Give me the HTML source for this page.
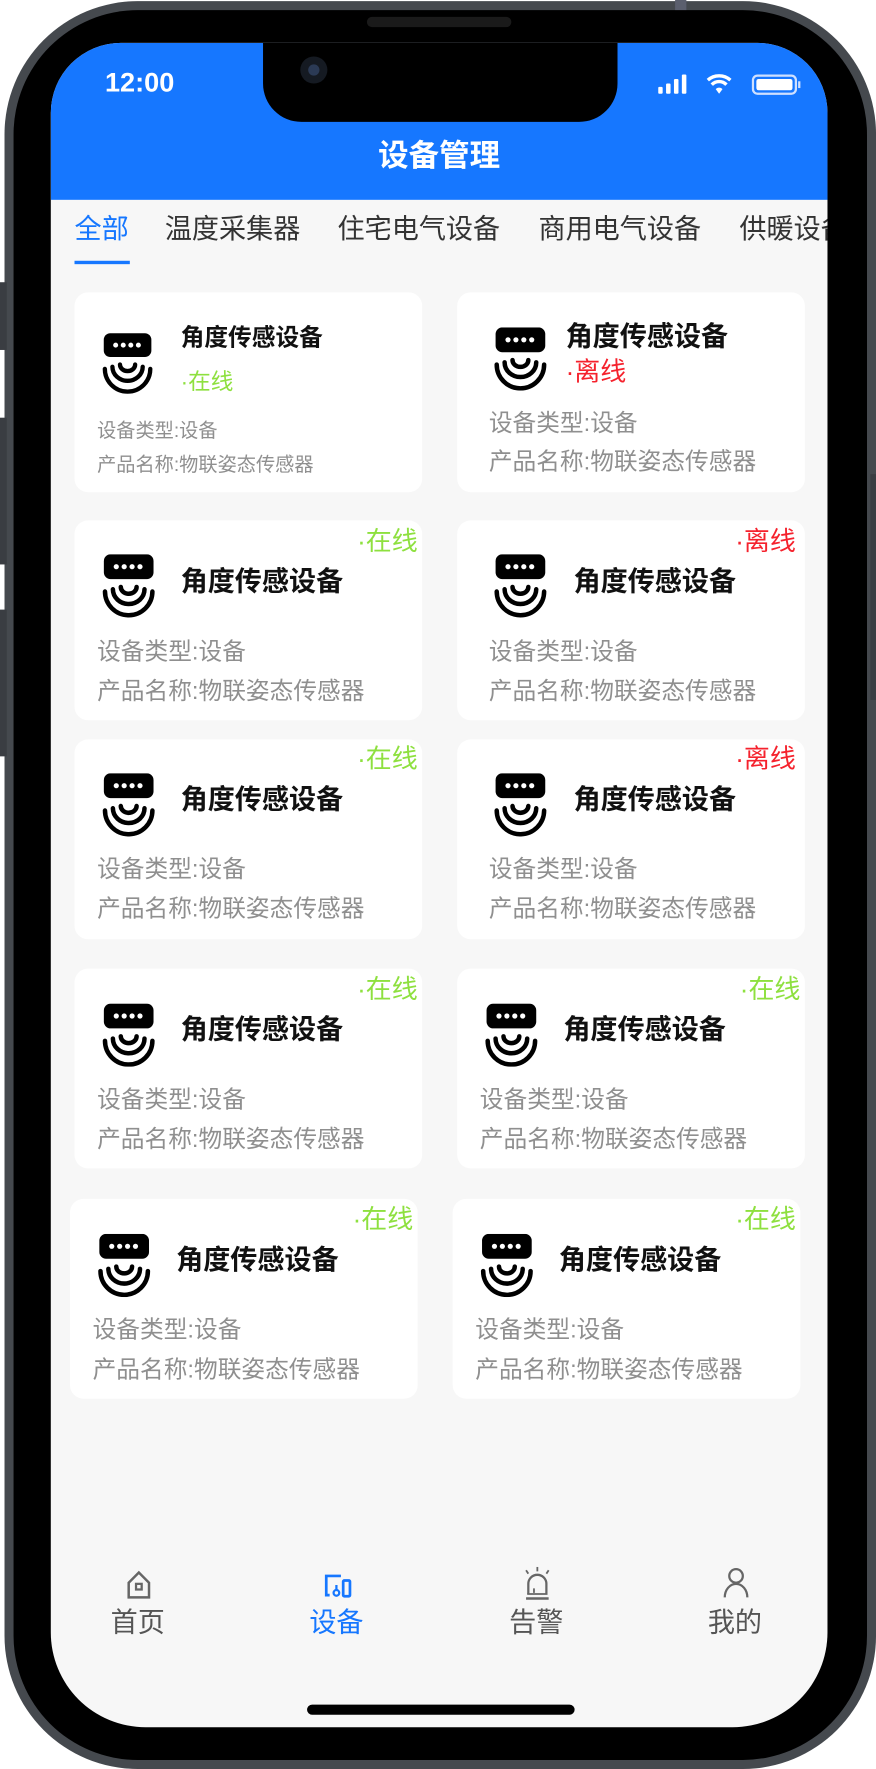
<!DOCTYPE html>
<html><head><meta charset="utf-8"><style>
*{margin:0;padding:0;box-sizing:border-box}
html,body{width:876px;height:1768px;overflow:hidden;background:#fff}
body{font-family:"Liberation Sans","Noto Sans CJK SC",sans-serif}
#w{position:absolute;left:0;top:0;width:776px;height:1566px;transform:scale(1.1289);transform-origin:0 0}
.a{position:absolute}
.frame{left:4px;top:1px;width:772px;height:1566px;border-radius:118px;background:#45494e}
.bez{left:12px;top:9px;width:756px;height:1550px;border-radius:110px;background:#000}
.scr{left:45px;top:38px;width:688px;height:1492px;border-radius:62px 62px 84px 84px;background:#f7f7f7;overflow:hidden}
.hdr{left:0;top:0;width:688px;height:139px;background:#1677ff}
.notch{left:188px;top:0;width:314px;height:70px;background:#000;border-radius:0 0 34px 34px}
.card{position:absolute;width:308px;height:177px;background:#fff;border-radius:12px}
.t{position:absolute;font-size:24px;font-weight:bold;color:#111;white-space:nowrap;line-height:1.2}
.g{position:absolute;font-size:21px;color:#8f8f8f;white-space:nowrap;line-height:1.2}
.on{color:#8ee03f}.off{color:#f5222d}
.st{position:absolute;font-size:23px;white-space:nowrap;line-height:1.2}
.ic{position:absolute;width:48px;height:56px}
.tab{position:absolute;font-size:24px;color:#333;top:152px;white-space:nowrap;line-height:1.2}
.nav{position:absolute;top:1386px;font-size:24px;color:#555;transform:translateX(-50%);white-space:nowrap;line-height:1.2}
</style></head><body><div id="w">
<div class="a frame"></div>
<div class="a" style="left:598px;top:0;width:10px;height:14px;background:#5b5f6e"></div>
<div class="a" style="left:0;top:250px;width:6px;height:60px;background:#3a3d42"></div>
<div class="a" style="left:0;top:370px;width:6px;height:130px;background:#3a3d42"></div>
<div class="a" style="left:0;top:540px;width:6px;height:130px;background:#3a3d42"></div>
<div class="a" style="left:771px;top:420px;width:5px;height:200px;background:#3a3d42"></div>
<div class="a bez"></div>
<div class="a" style="left:325px;top:15px;width:128px;height:9px;border-radius:5px;background:#1a1a1a"></div>
<div class="a scr">
 <div class="a hdr"></div>
 <div class="a notch"></div>
 <div class="a" style="left:221px;top:12px;width:24px;height:24px;border-radius:50%;background:#151a22"><div class="a" style="left:7px;top:7px;width:10px;height:10px;border-radius:50%;background:#2b3a55"></div></div>
 <div class="a" style="left:48px;top:22px;font-size:24px;font-weight:bold;color:#fff">12:00</div>
 <svg class="a" style="left:538px;top:26px" width="128" height="22" viewBox="0 0 128 22">
  <rect x="0" y="13" width="4" height="6" rx="1" fill="#fff"/><rect x="7" y="10" width="4" height="9" rx="1" fill="#fff"/><rect x="14" y="6" width="4" height="13" rx="1" fill="#fff"/><rect x="21" y="2" width="4" height="17" rx="1" fill="#fff"/>
  <path d="M44 7a15 15 0 0 1 20 0" stroke="#fff" stroke-width="3" fill="none"/><path d="M47.5 11a9 9 0 0 1 13 0" stroke="#fff" stroke-width="3" fill="none"/><path d="M51 15l3 4 3-4a4 4 0 0 0-6 0z" fill="#fff"/>
  <rect x="84" y="3" width="38" height="16" rx="4" stroke="#cfe0ff" stroke-width="2" fill="none"/><rect x="87" y="6" width="32" height="10" rx="2" fill="#fff"/><rect x="124" y="8" width="2" height="6" fill="#cfe0ff"/>
 </svg>
 <div class="a" style="left:0;width:688px;top:78px;text-align:center;font-size:27px;font-weight:bold;color:#fff">设备管理</div>
 <div class="tab" style="left:21px;color:#1677ff">全部</div>
 <div class="a" style="left:21px;top:193px;width:49px;height:3px;background:#1677ff"></div>
 <div class="tab" style="left:101px">温度采集器</div>
 <div class="tab" style="left:254px">住宅电气设备</div>
 <div class="tab" style="left:432px">商用电气设备</div>
 <div class="tab" style="left:610px;width:80px;overflow:hidden">供暖设备</div>
 <svg class="a" style="left:66px;top:1353px" width="24" height="26" viewBox="0 0 24 26"><path d="M3 11L12 2l9 9v13H3z" stroke="#666" stroke-width="2.2" fill="none"/><rect x="9.5" y="12" width="5" height="5" stroke="#666" stroke-width="2" fill="none"/></svg>
 <svg class="a" style="left:241px;top:1356px" width="28" height="22" viewBox="0 0 28 22"><path d="M16 2H3v17h3" stroke="#1677ff" stroke-width="2.4" fill="none"/><rect x="18" y="6" width="6" height="14" rx="1" stroke="#1677ff" stroke-width="2.4" fill="none"/><circle cx="12" cy="17" r="2.5" stroke="#1677ff" stroke-width="2" fill="none"/><path d="M12 10v4" stroke="#1677ff" stroke-width="2"/></svg>
 <svg class="a" style="left:418px;top:1350px" width="26" height="30" viewBox="0 0 26 30"><path d="M5 24V15a8 8 0 0 1 16 0v9" stroke="#666" stroke-width="2" fill="none"/><path d="M3 28h20" stroke="#666" stroke-width="2.2"/><path d="M4 24h18M10 19v4" stroke="#666" stroke-width="1.6"/><path d="M13 0v4M3 3l2 3M23 3l-2 3" stroke="#666" stroke-width="1.6"/></svg>
 <svg class="a" style="left:595px;top:1350px" width="24" height="28" viewBox="0 0 24 28"><circle cx="12" cy="8" r="6" stroke="#666" stroke-width="2" fill="none"/><path d="M2 27a10 12 0 0 1 20 0" stroke="#666" stroke-width="2" fill="none"/></svg>
 <div class="nav" style="left:77px">首页</div>
 <div class="nav" style="left:253px;color:#1677ff">设备</div>
 <div class="nav" style="left:430px">告警</div>
 <div class="nav" style="left:606px">我的</div>
 <div class="a" style="left:227px;top:1472px;width:237px;height:9px;border-radius:5px;background:#000"></div>
</div>
<svg width="0" height="0" style="position:absolute"><defs><g id="dv"><rect x="2" y="0" width="44" height="22" rx="6" fill="#000"/><circle cx="13" cy="11" r="2.3" fill="#fff"/><circle cx="20" cy="11" r="2.3" fill="#fff"/><circle cx="27" cy="11" r="2.3" fill="#fff"/><circle cx="34" cy="11" r="2.3" fill="#fff"/><path d="M3 33a21 21 0 0 0 42 0" stroke="#000" stroke-width="4" fill="none" stroke-linecap="round"/><path d="M10 31a14 13 0 0 0 28 0" stroke="#000" stroke-width="4" fill="none" stroke-linecap="round"/><path d="M17 29a7 6 0 0 0 14 0" stroke="#000" stroke-width="4" fill="none" stroke-linecap="round"/></g></defs></svg>

<div class="card" style="left:66px;top:259px">
 <svg class="ic" style="left:24px;top:36px;width:46px;height:54px" viewBox="0 0 48 56"><use href="#dv"/></svg>
 <div class="t" style="left:94px;top:28px;font-size:21px">角度传感设备</div>
 <div class="st on" style="left:94px;top:68px;font-size:20px">·在线</div>
 <div class="g" style="left:20px;top:113px;font-size:17px">设备类型:设备</div>
 <div class="g" style="left:20px;top:143px;font-size:17px">产品名称:物联姿态传感器</div>
</div>
<div class="card" style="left:405px;top:259px">
 <svg class="ic" style="left:32px;top:31px" viewBox="0 0 48 56"><use href="#dv"/></svg>
 <div class="t" style="left:96px;top:26px">角度传感设备</div>
 <div class="st off" style="left:96px;top:57px">·离线</div>
 <div class="g" style="left:28px;top:104px">设备类型:设备</div>
 <div class="g" style="left:28px;top:138px">产品名称:物联姿态传感器</div>
</div>
<div class="card" style="left:66px;top:461px"><div class="st on" style="right:4px;top:5px">·在线</div><svg class="ic" style="left:24px;top:30px" viewBox="0 0 48 56"><use href="#dv"/></svg><div class="t" style="left:94px;top:41px">角度传感设备</div><div class="g" style="left:20px;top:104px">设备类型:设备</div><div class="g" style="left:20px;top:139px">产品名称:物联姿态传感器</div></div>
<div class="card" style="left:405px;top:461px"><div class="st off" style="right:8px;top:5px">·离线</div><svg class="ic" style="left:32px;top:30px" viewBox="0 0 48 56"><use href="#dv"/></svg><div class="t" style="left:103px;top:41px">角度传感设备</div><div class="g" style="left:28px;top:104px">设备类型:设备</div><div class="g" style="left:28px;top:139px">产品名称:物联姿态传感器</div></div>
<div class="card" style="left:66px;top:655px"><div class="st on" style="right:4px;top:4px">·在线</div><svg class="ic" style="left:24px;top:30px" viewBox="0 0 48 56"><use href="#dv"/></svg><div class="t" style="left:94px;top:40px">角度传感设备</div><div class="g" style="left:20px;top:103px">设备类型:设备</div><div class="g" style="left:20px;top:138px">产品名称:物联姿态传感器</div></div>
<div class="card" style="left:405px;top:655px"><div class="st off" style="right:8px;top:4px">·离线</div><svg class="ic" style="left:32px;top:30px" viewBox="0 0 48 56"><use href="#dv"/></svg><div class="t" style="left:103px;top:40px">角度传感设备</div><div class="g" style="left:28px;top:103px">设备类型:设备</div><div class="g" style="left:28px;top:138px">产品名称:物联姿态传感器</div></div>
<div class="card" style="left:66px;top:858px"><div class="st on" style="right:4px;top:5px">·在线</div><svg class="ic" style="left:24px;top:31px" viewBox="0 0 48 56"><use href="#dv"/></svg><div class="t" style="left:94px;top:41px">角度传感设备</div><div class="g" style="left:20px;top:104px">设备类型:设备</div><div class="g" style="left:20px;top:139px">产品名称:物联姿态传感器</div></div>
<div class="card" style="left:405px;top:858px"><div class="st on" style="right:4px;top:5px">·在线</div><svg class="ic" style="left:24px;top:31px" viewBox="0 0 48 56"><use href="#dv"/></svg><div class="t" style="left:94px;top:41px">角度传感设备</div><div class="g" style="left:20px;top:104px">设备类型:设备</div><div class="g" style="left:20px;top:139px">产品名称:物联姿态传感器</div></div>
<div class="card" style="left:62px;top:1062px"><div class="st on" style="right:4px;top:5px">·在线</div><svg class="ic" style="left:24px;top:31px" viewBox="0 0 48 56"><use href="#dv"/></svg><div class="t" style="left:94px;top:41px">角度传感设备</div><div class="g" style="left:20px;top:104px">设备类型:设备</div><div class="g" style="left:20px;top:139px">产品名称:物联姿态传感器</div></div>
<div class="card" style="left:401px;top:1062px"><div class="st on" style="right:4px;top:5px">·在线</div><svg class="ic" style="left:24px;top:31px" viewBox="0 0 48 56"><use href="#dv"/></svg><div class="t" style="left:94px;top:41px">角度传感设备</div><div class="g" style="left:20px;top:104px">设备类型:设备</div><div class="g" style="left:20px;top:139px">产品名称:物联姿态传感器</div></div>
</div></body></html>
